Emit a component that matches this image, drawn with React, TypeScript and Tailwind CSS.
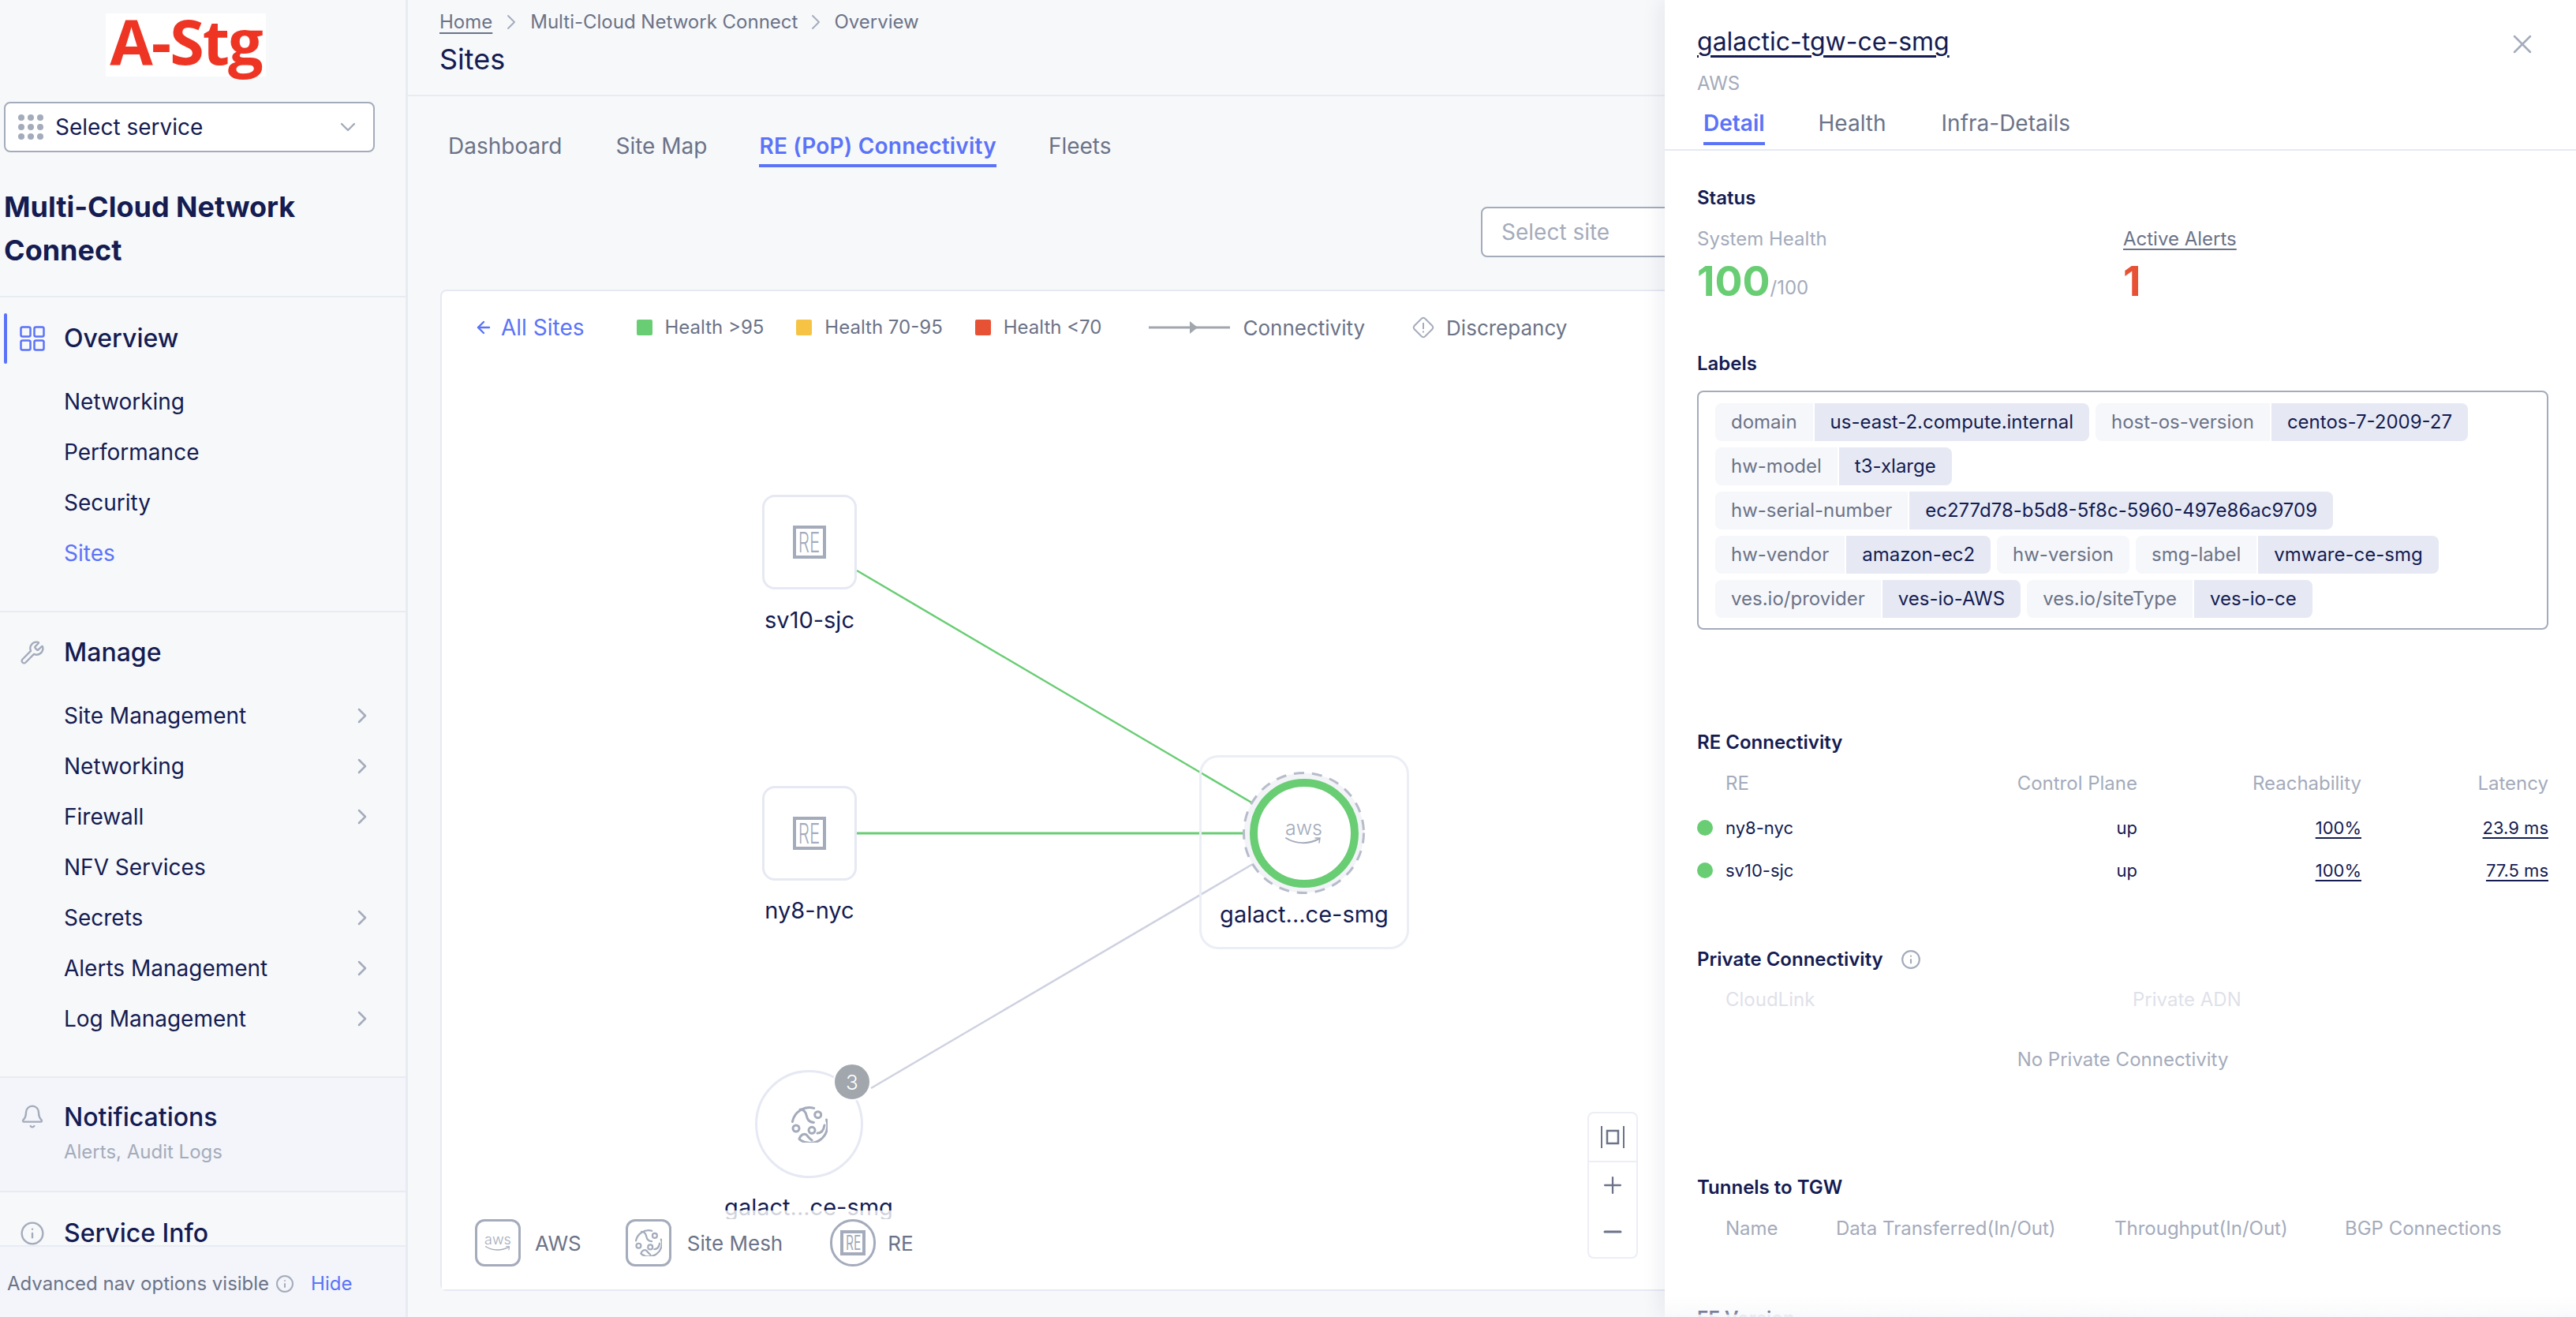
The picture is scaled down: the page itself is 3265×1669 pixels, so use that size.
import React from "react";
import { Bell, ChevronDown, ChevronRight, Info, Wrench, X, ArrowLeft, Plus, Minus } from "lucide-react";

const sub1 = ["Networking", "Performance", "Security", "Sites"];
const sub2: [string, boolean][] = [
  ["Site Management", true],
  ["Networking", true],
  ["Firewall", true],
  ["NFV Services", false],
  ["Secrets", true],
  ["Alerts Management", true],
  ["Log Management", true],
];

const labels: [string, string?][] = [
  ["domain", "us-east-2.compute.internal"],
  ["host-os-version", "centos-7-2009-27"],
  ["hw-model", "t3-xlarge"],
  ["hw-serial-number", "ec277d78-b5d8-5f8c-5960-497e86ac9709"],
  ["hw-vendor", "amazon-ec2"],
  ["hw-version"],
  ["smg-label", "vmware-ce-smg"],
  ["ves.io/provider", "ves-io-AWS"],
  ["ves.io/siteType", "ves-io-ce"],
];

function MeshIcon({ className }: { className?: string }) {
  return (
    <svg viewBox="0 0 46 46" fill="none" stroke="currentColor" strokeWidth="3" strokeLinecap="round" className={className}>
      <path d="M1.4 19.5A22 22 0 0 1 28.7 2.4" />
      <path d="M44.5 17A22 22 0 0 1 10.5 42" />
      <path d="M11 4C16 4 18 7 19 11C20 15 21 20 28.5 20.5" />
      <circle cx="33.7" cy="10.7" r="4" />
      <circle cx="6" cy="28" r="4" />
      <circle cx="26" cy="30.3" r="4" />
      <path d="M33 34C38 34 41 30 42 24" />
      <path d="M10 41C12 36 16 34 19 36C21 38 22 40 26 43" />
    </svg>
  );
}

function AwsIcon({ big }: { big?: boolean }) {
  return (
    <div className="flex flex-col items-center text-[#a4abbb]">
      <span className={big ? "text-[25px] leading-[22px] font-light" : "text-[18px] leading-[15px] font-light"}>aws</span>
      <svg viewBox="0 0 46 12" fill="none" stroke="currentColor" strokeWidth="2" strokeLinecap="round" className={big ? "w-[46px] h-[12px]" : "w-[32px] h-[9px]"}>
        <path d="M1 2C13 10 30 10 43 3" />
        <path d="M38 2L44 2L43 8" strokeWidth="1.5" />
      </svg>
    </div>
  );
}

function ReBox({ size }: { size: "lg" | "sm" }) {
  if (size === "lg") {
    return (
      <div className="w-[42px] h-[42px] border-[4px] border-[#a4abbb] flex items-center justify-center text-[#a4abbb]">
        <span className="text-[35px] leading-none font-light scale-x-[0.64] whitespace-nowrap">RE</span>
      </div>
    );
  }
  return (
    <div className="w-[32px] h-[32px] border-[4px] border-[#a4abbb] flex items-center justify-center text-[#a4abbb]">
      <span className="text-[25px] leading-none font-normal scale-x-[0.62] whitespace-nowrap">RE</span>
    </div>
  );
}

function Swatch({ color, label, cls }: { color: string; label: string; cls: string }) {
  return (
    <div className={`flex items-center gap-[16px] ${cls}`}>
      <span className={`w-[20px] h-[20px] rounded-[2px] ${color}`} />
      <span className="text-[24px] text-[#6b7388]">{label}</span>
    </div>
  );
}

function NavRow({ text, color = "text-[#141c52]", chev }: { text: string; color?: string; chev?: boolean }) {
  return (
    <div className={`h-[64px] flex items-center pl-[81px] pr-[39px] justify-between text-[28px] ${color}`}>
      <span>{text}</span>
      {chev && <ChevronRight className="w-[32px] h-[32px] text-[#a4abbb]" strokeWidth={1.9} />}
    </div>
  );
}

function Sidebar() {
  return (
    <aside className="w-[517px] h-full flex flex-col shrink-0 border-r-[3px] border-[#e9ebf3] bg-[#f7f8fa] overflow-hidden">
      <div className="flex-1 min-h-0 overflow-hidden">
        <div className="mt-[17px] ml-[134px] w-[203px] h-[80px] bg-white flex items-center justify-center pb-[10px] font-['Open_Sans',sans-serif] font-bold text-[79px] leading-[80px] tracking-[-2px] text-[#ee3524]">
          A-Stg
        </div>
        <div className="mt-[32px] ml-[5px] w-[470px] h-[64px] border-2 border-[#a4abbb] rounded-[8px] bg-white flex items-center pl-[16px] pr-[16px]">
          <svg viewBox="0 0 32 32" className="w-[32px] h-[32px] text-[#a4abbb]" fill="currentColor">
            {[4, 16, 28].map((x) =>
              [4, 16, 28].map((y) => <circle key={`${x}-${y}`} cx={x} cy={y} r="4" />)
            )}
          </svg>
          <span className="ml-[15px] text-[28px] text-[#141c52] flex-1">Select service</span>
          <ChevronDown className="w-[32px] h-[32px] text-[#a4abbb]" strokeWidth={1.8} />
        </div>
        <div className="mt-[42px] ml-[5px] w-[480px] text-[36px] leading-[55px] font-bold text-[#141c52]">
          Multi-Cloud Network Connect
        </div>
        <div className="mt-[30px] h-[2px] bg-[#e9ebf3]" />

        <div className="pt-[20px] pb-[41px]">
          <div className="relative h-[64px] flex items-center pl-[25px]">
            <span className="absolute left-[5px] top-0 w-[4px] h-[64px] bg-[#5b73f8] rounded-[2px]" />
            <svg viewBox="0 0 32 32" fill="none" stroke="#5b73f8" strokeWidth="2.5" className="w-[32px] h-[32px]">
              <rect x="1.5" y="1.5" width="12" height="12" rx="2" />
              <rect x="18.5" y="1.5" width="12" height="12" rx="2" />
              <rect x="1.5" y="18.5" width="12" height="12" rx="2" />
              <rect x="18.5" y="18.5" width="12" height="12" rx="2" />
            </svg>
            <span className="ml-[24px] text-[32px] font-medium text-[#141c52]">Overview</span>
          </div>
          <div className="mt-[16px]">
            {sub1.map((s) => (
              <NavRow key={s} text={s} color={s === "Sites" ? "text-[#5b73f8]" : "text-[#141c52]"} />
            ))}
          </div>
        </div>
        <div className="h-[2px] bg-[#e9ebf3]" />

        <div className="pt-[19px] pb-[41px]">
          <div className="h-[64px] flex items-center pl-[25px]">
            <Wrench className="w-[32px] h-[32px] text-[#a4abbb]" strokeWidth={1.8} />
            <span className="ml-[24px] text-[32px] font-medium text-[#141c52]">Manage</span>
          </div>
          <div className="mt-[16px]">
            {sub2.map(([s, c]) => (
              <NavRow key={s} text={s} chev={c} />
            ))}
          </div>
        </div>
        <div className="h-[2px] bg-[#e9ebf3]" />

        <div className="h-[145px] bg-[#f3f5fa] border-b-2 border-[#e9ebf3] flex pl-[25px] pt-[30px]">
          <Bell className="w-[32px] h-[32px] mt-[3px] text-[#a4abbb]" strokeWidth={1.8} />
          <div className="ml-[24px]">
            <div className="text-[32px] leading-[40px] font-medium text-[#141c52]">Notifications</div>
            <div className="mt-[8px] text-[24px] leading-[32px] text-[#a4abbb]">Alerts, Audit Logs</div>
          </div>
        </div>
        <div className="pt-[32px] pl-[25px] flex items-center">
          <Info className="w-[32px] h-[32px] text-[#a4abbb]" strokeWidth={1.8} />
          <span className="ml-[24px] text-[32px] leading-[40px] font-medium text-[#141c52]">Service Info</span>
        </div>
      </div>
      <div className="h-[91px] shrink-0 bg-[#f3f5fa] border-t-2 border-[#e9ebf3] flex items-center pl-[9px] pt-[4px]">
        <span className="text-[24px] text-[#6b7388]">Advanced nav options visible</span>
        <Info className="ml-[8px] w-[24px] h-[24px] text-[#a4abbb]" strokeWidth={2} />
        <span className="ml-[21px] text-[24px] text-[#5b73f8]">Hide</span>
      </div>
    </aside>
  );
}

function Canvas() {
  return (
    <div className="relative w-full h-full">
      <div className="flex items-center h-[92px] pl-[41px]">
        <ArrowLeft className="w-[24px] h-[24px] text-[#5b73f8]" strokeWidth={2.4} />
        <span className="ml-[10px] text-[28px] text-[#5b73f8]">All Sites</span>
        <Swatch color="bg-[#69cd74]" label="Health >95" cls="ml-[66px]" />
        <Swatch color="bg-[#f6c344]" label="Health 70-95" cls="ml-[41px]" />
        <Swatch color="bg-[#e85234]" label="Health <70" cls="ml-[41px]" />
        <svg viewBox="0 0 103 20" className="ml-[60px] w-[103px] h-[20px]">
          <line x1="0" y1="10" x2="103" y2="10" stroke="#a1a7ad" strokeWidth="3" />
          <path d="M52 2L62 10L52 18Z" fill="#a1a7ad" />
        </svg>
        <span className="ml-[16px] text-[26px] text-[#6b7388]">Connectivity</span>
        <svg viewBox="0 0 28 28" fill="none" stroke="#a4abbb" strokeWidth="2" className="ml-[60px] w-[28px] h-[28px]">
          <path d="M12 2.5Q14 1 16 2.5L25.5 12Q27 14 25.5 16L16 25.5Q14 27 12 25.5L2.5 16Q1 14 2.5 12Z" />
          <line x1="14" y1="8" x2="14" y2="16" />
          <line x1="14" y1="18.5" x2="14" y2="20.5" />
        </svg>
        <span className="ml-[15px] text-[26px] text-[#6b7388]">Discrepancy</span>
      </div>

      <svg className="absolute left-0 top-0 w-full h-full pointer-events-none">
        <line x1="526" y1="354" x2="1033" y2="652" stroke="#69cd74" strokeWidth="2.5" />
        <line x1="526" y1="687" x2="1024" y2="687" stroke="#69cd74" strokeWidth="3" />
        <line x1="544" y1="1010" x2="1033" y2="723" stroke="#ced1e0" strokeWidth="2.5" />
      </svg>

      {/* RE nodes */}
      <div className="absolute left-[406px] top-[258px] w-[120px] flex flex-col items-center">
        <div className="w-[120px] h-[120px] border-[3px] border-[#e6e9f3] rounded-[16px] bg-white flex items-center justify-center">
          <ReBox size="lg" />
        </div>
        <div className="mt-[19px] text-[29px] leading-[40px] text-[#141c52] whitespace-nowrap">sv10-sjc</div>
      </div>
      <div className="absolute left-[406px] top-[627px] w-[120px] flex flex-col items-center">
        <div className="w-[120px] h-[120px] border-[3px] border-[#e6e9f3] rounded-[16px] bg-white flex items-center justify-center">
          <ReBox size="lg" />
        </div>
        <div className="mt-[18px] text-[29px] leading-[40px] text-[#141c52] whitespace-nowrap">ny8-nyc</div>
      </div>

      {/* AWS node */}
      <div className="absolute left-[960px] top-[588px] w-[266px] h-[246px] border-[3px] border-[#eceef6] rounded-[24px]">
        <div className="absolute left-[52px] top-[18px] w-[155px] h-[155px] flex items-center justify-center">
          <svg viewBox="0 0 155 155" className="absolute inset-0 w-[155px] h-[155px]">
            <circle cx="77.5" cy="77.5" r="76" fill="#f3f4f8" stroke="#b8bcca" strokeWidth="3" strokeDasharray="13 10" />
          </svg>
          <div className="relative w-[138px] h-[138px] rounded-full border-[10px] border-[#69cd74] bg-white flex items-center justify-center pb-[2px]">
            <AwsIcon big />
          </div>
        </div>
        <div className="absolute left-0 right-0 top-[179px] text-center text-[29px] leading-[40px] text-[#141c52] whitespace-nowrap">
          galact...ce-smg
        </div>
      </div>

      {/* Mesh node */}
      <div className="absolute left-[397px] top-[987px] w-[137px] h-[137px] rounded-full border-[3px] border-[#e6e9f3] bg-white flex items-center justify-center text-[#a4abbb]">
        <MeshIcon className="w-[46px] h-[46px]" />
      </div>
      <div className="absolute left-[496px] top-[978px] w-[48px] h-[48px] rounded-full bg-[#a1a7ad] border-2 border-white flex items-center justify-center text-white text-[26px] font-light">
        3
      </div>
      <div className="absolute left-[327px] w-[276px] top-[1141px] text-center text-[29px] leading-[40px] text-[#141c52] whitespace-nowrap">
        galact...ce-smg
      </div>

      {/* Legend */}
      <div className="absolute left-0 right-0 bottom-0 h-[89px] bg-white flex items-start pl-[42px]">
        <div className="absolute left-0 right-0 -top-[11px] h-[11px] bg-white/80" />
        <div className="w-[58px] h-[60px] rounded-[12px] border-[3px] border-[#a4abbb] flex items-center justify-center">
          <AwsIcon />
        </div>
        <span className="ml-[18px] h-[60px] flex items-center text-[26px] text-[#6b7388]">AWS</span>
        <div className="ml-[56px] w-[58px] h-[60px] rounded-[12px] border-[3px] border-[#a4abbb] flex items-center justify-center text-[#a4abbb]">
          <MeshIcon className="w-[34px] h-[34px]" />
        </div>
        <span className="ml-[20px] h-[60px] flex items-center text-[26px] text-[#6b7388]">Site Mesh</span>
        <div className="ml-[60px] w-[58px] h-[60px] rounded-full border-[3px] border-[#a4abbb] flex items-center justify-center">
          <ReBox size="sm" />
        </div>
        <span className="ml-[15px] h-[60px] flex items-center text-[26px] text-[#6b7388]">RE</span>
      </div>

      {/* Zoom controls */}
      <div className="absolute left-[1452px] top-[1040px] w-[64px] h-[186px] rounded-[8px] border-2 border-[#eceef6] bg-white flex flex-col items-center text-[#6b7388]">
        <div className="w-full h-[62px] border-b-2 border-[#eceef6] flex items-center justify-center">
          <svg viewBox="0 0 30 28" fill="none" stroke="currentColor" strokeWidth="2" className="w-[30px] h-[28px]">
            <line x1="1" y1="0" x2="1" y2="28" />
            <line x1="29" y1="0" x2="29" y2="28" />
            <rect x="8" y="6" width="14" height="16" strokeWidth="2.5" />
          </svg>
        </div>
        <Plus className="mt-[12px] w-[34px] h-[34px]" strokeWidth={1.6} />
        <Minus className="mt-[25px] w-[34px] h-[34px]" strokeWidth={2.2} />
      </div>
    </div>
  );
}

function Main() {
  return (
    <main className="flex-1 min-w-0 h-full flex flex-col overflow-hidden bg-[#f7f8fa]">
      <div className="h-[122px] shrink-0 border-b-2 border-[#e9ebf3] pl-[40px] pt-[10px]">
        <div className="h-[36px] flex items-center text-[24px] text-[#6b7388]">
          <span className="underline underline-offset-[5px]">Home</span>
          <ChevronRight className="mx-[8px] w-[32px] h-[32px] text-[#a4abbb]" strokeWidth={1.4} />
          <span>Multi-Cloud Network Connect</span>
          <ChevronRight className="mx-[7px] w-[32px] h-[32px] text-[#a4abbb]" strokeWidth={1.4} />
          <span>Overview</span>
        </div>
        <div className="mt-[9px] text-[36px] leading-[40px] text-[#141c52]">Sites</div>
      </div>
      <div className="mt-[43px] pl-[51px] flex items-start gap-[66px] text-[28px] text-[#6b7388] shrink-0 h-[48px]">
        <span className="leading-[40px]">Dashboard</span>
        <span className="leading-[40px] ml-[2px]">Site Map</span>
        <span className="leading-[40px] font-semibold tracking-[0.2px] text-[#5b73f8] border-b-4 border-[#5b73f8] h-[47px]">RE (PoP) Connectivity</span>
        <span className="leading-[40px]">Fleets</span>
      </div>
      <div className="mt-[49px] ml-[1360px] w-[700px] h-[64px] shrink-0 rounded-[8px] border-2 border-[#a4abbb] bg-white flex items-center pl-[24px] text-[28px] text-[#a4abbb]">
        Select site
      </div>
      <div className="mt-[41px] ml-[41px] w-[2660px] h-[1269px] shrink-0 rounded-[8px] border-2 border-[#e6e9f3] bg-white">
        <Canvas />
      </div>
    </main>
  );
}

function SectionTitle({ children, cls = "" }: { children: React.ReactNode; cls?: string }) {
  return <div className={`text-[24px] leading-[32px] font-semibold text-[#141c52] ${cls}`}>{children}</div>;
}

function Chip({ k, v }: { k: string; v?: string }) {
  return (
    <div className="flex h-[48px] rounded-[8px] overflow-hidden text-[24px] leading-[48px]">
      <span className="bg-[#f6f7fa] px-[20px] text-[#6b7388]">{k}</span>
      {v && <span className="ml-[2px] bg-[#e6e9f3] px-[20px] text-[#141c52]">{v}</span>}
    </div>
  );
}

function RERow({ name, latency }: { name: string; latency: string }) {
  return (
    <div className="grid grid-cols-[36px_340px_182px_284px_237px] h-[54px] items-center text-[22px] text-[#141c52]">
      <span className="w-[20px] h-[20px] rounded-full bg-[#69cd74]" />
      <span>{name}</span>
      <span className="text-right">up</span>
      <span className="text-right underline underline-offset-[4px]">100%</span>
      <span className="text-right underline underline-offset-[4px]">{latency}</span>
    </div>
  );
}

function Panel() {
  return (
    <section className="absolute left-[2110px] top-0 bottom-0 w-[1155px] bg-white shadow-[-6px_0_24px_rgba(20,28,82,0.07)] overflow-hidden">
      <div className="h-[191px] border-b-2 border-[#e6e9f3] pl-[41px] pt-[33px] relative">
        <div className="text-[32px] leading-[40px] text-[#141c52] underline underline-offset-[6px]">galactic-tgw-ce-smg</div>
        <X className="absolute left-[1067px] top-[36px] w-[40px] h-[40px] text-[#a4abbb]" strokeWidth={1.5} />
        <div className="mt-[17px] text-[24px] leading-[32px] text-[#a4abbb]">AWS</div>
        <div className="mt-[16px] ml-[8px] flex gap-[68px] text-[28px] leading-[36px] text-[#6b7388]">
          <span className="h-[46px] border-b-4 border-[#5b73f8] font-semibold text-[#5b73f8]">Detail</span>
          <span>Health</span>
          <span className="ml-[2px]">Infra-Details</span>
        </div>
      </div>
      <div className="pl-[41px] pr-[35px]">
        <SectionTitle cls="mt-[44px]">Status</SectionTitle>
        <div className="mt-[20px] grid grid-cols-[540px_1fr]">
          <div>
            <div className="text-[24px] leading-[32px] text-[#a4abbb]">System Health</div>
            <div className="mt-[10px] h-[56px] flex items-end leading-[56px]">
              <span className="text-[52px] font-bold text-[#69cd74]">100</span>
              <span className="text-[24px] leading-[40px] text-[#a4abbb]">/100</span>
            </div>
          </div>
          <div>
            <div className="text-[24px] leading-[32px] text-[#6b7388] underline underline-offset-[4px]">Active Alerts</div>
            <div className="mt-[10px] h-[56px] text-[52px] leading-[56px] font-bold text-[#e85234]">1</div>
          </div>
        </div>
        <SectionTitle cls="mt-[60px]">Labels</SectionTitle>
        <div className="mt-[18px] h-[303px] rounded-[8px] border-2 border-[#a4abbb] pl-[21px] pr-[21px] pt-[14px] flex flex-wrap content-start gap-x-[8px] gap-y-[8px]">
          {labels.map(([k, v]) => (
            <Chip key={k} k={k} v={v} />
          ))}
        </div>

        <SectionTitle cls="mt-[127px]">RE Connectivity</SectionTitle>
        <div className="mt-[20px] grid grid-cols-[36px_340px_182px_284px_237px] text-[24px] leading-[32px] text-[#a4abbb]">
          <span />
          <span>RE</span>
          <span className="text-right">Control Plane</span>
          <span className="text-right">Reachability</span>
          <span className="text-right">Latency</span>
        </div>
        <div className="mt-[13px]">
          <RERow name="ny8-nyc" latency="23.9 ms" />
          <RERow name="sv10-sjc" latency="77.5 ms" />
        </div>

        <div className="mt-[70px] flex items-center">
          <SectionTitle>Private Connectivity</SectionTitle>
          <Info className="ml-[22px] w-[26px] h-[26px] text-[#a4abbb]" strokeWidth={2} />
        </div>
        <div className="mt-[19px] grid grid-cols-[36px_516px_1fr] text-[24px] leading-[32px] text-[#dfe1e9]">
          <span />
          <span>CloudLink</span>
          <span>Private ADN</span>
        </div>
        <div className="mt-[44px] text-center text-[24px] leading-[32px] text-[#a4abbb]">No Private Connectivity</div>

        <SectionTitle cls="mt-[130px]">Tunnels to TGW</SectionTitle>
        <div className="mt-[20px] grid grid-cols-[36px_140px_353px_292px_1fr] text-[24px] leading-[32px] text-[#a4abbb]">
          <span />
          <span>Name</span>
          <span>Data Transferred(In/Out)</span>
          <span>Throughput(In/Out)</span>
          <span>BGP Connections</span>
        </div>
        <SectionTitle cls="mt-[82px]">EE Version</SectionTitle>
      </div>
      <div className="absolute left-0 right-0 bottom-0 h-[27px] bg-gradient-to-b from-white/0 to-[#f5f6f9]/60" />
      <div className="absolute left-0 right-0 bottom-0 h-[3px] bg-[#f8f8fb]/85" />
    </section>
  );
}

export default function App() {
  return (
    <div className="relative w-[3265px] h-[1669px] flex overflow-hidden font-['Inter',sans-serif] bg-[#f7f8fa]">
      <Sidebar />
      <Main />
      <Panel />
    </div>
  );
}
